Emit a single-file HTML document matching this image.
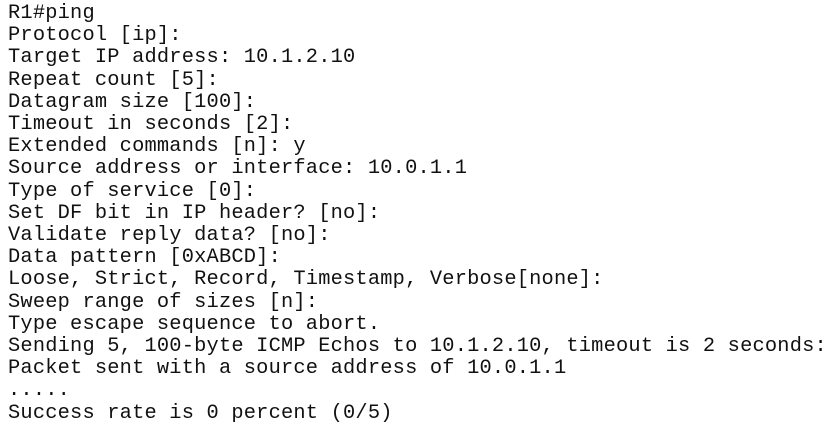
<!DOCTYPE html>
<html><head><style>
html,body{margin:0;padding:0;background:#fff;width:834px;height:431px;overflow:hidden}
pre{margin:0;padding:3px 0 0 8px;font-family:"Liberation Mono",monospace;font-size:20.35px;letter-spacing:0.2px;line-height:22.2px;color:#111}
</style></head><body><pre>R1#ping
Protocol [ip]:
Target IP address: 10.1.2.10
Repeat count [5]:
Datagram size [100]:
Timeout in seconds [2]:
Extended commands [n]: y
Source address or interface: 10.0.1.1
Type of service [0]:
Set DF bit in IP header? [no]:
Validate reply data? [no]:
Data pattern [0xABCD]:
Loose, Strict, Record, Timestamp, Verbose[none]:
Sweep range of sizes [n]:
Type escape sequence to abort.
Sending 5, 100-byte ICMP Echos to 10.1.2.10, timeout is 2 seconds:
Packet sent with a source address of 10.0.1.1
.....
Success rate is 0 percent (0/5)</pre></body></html>
